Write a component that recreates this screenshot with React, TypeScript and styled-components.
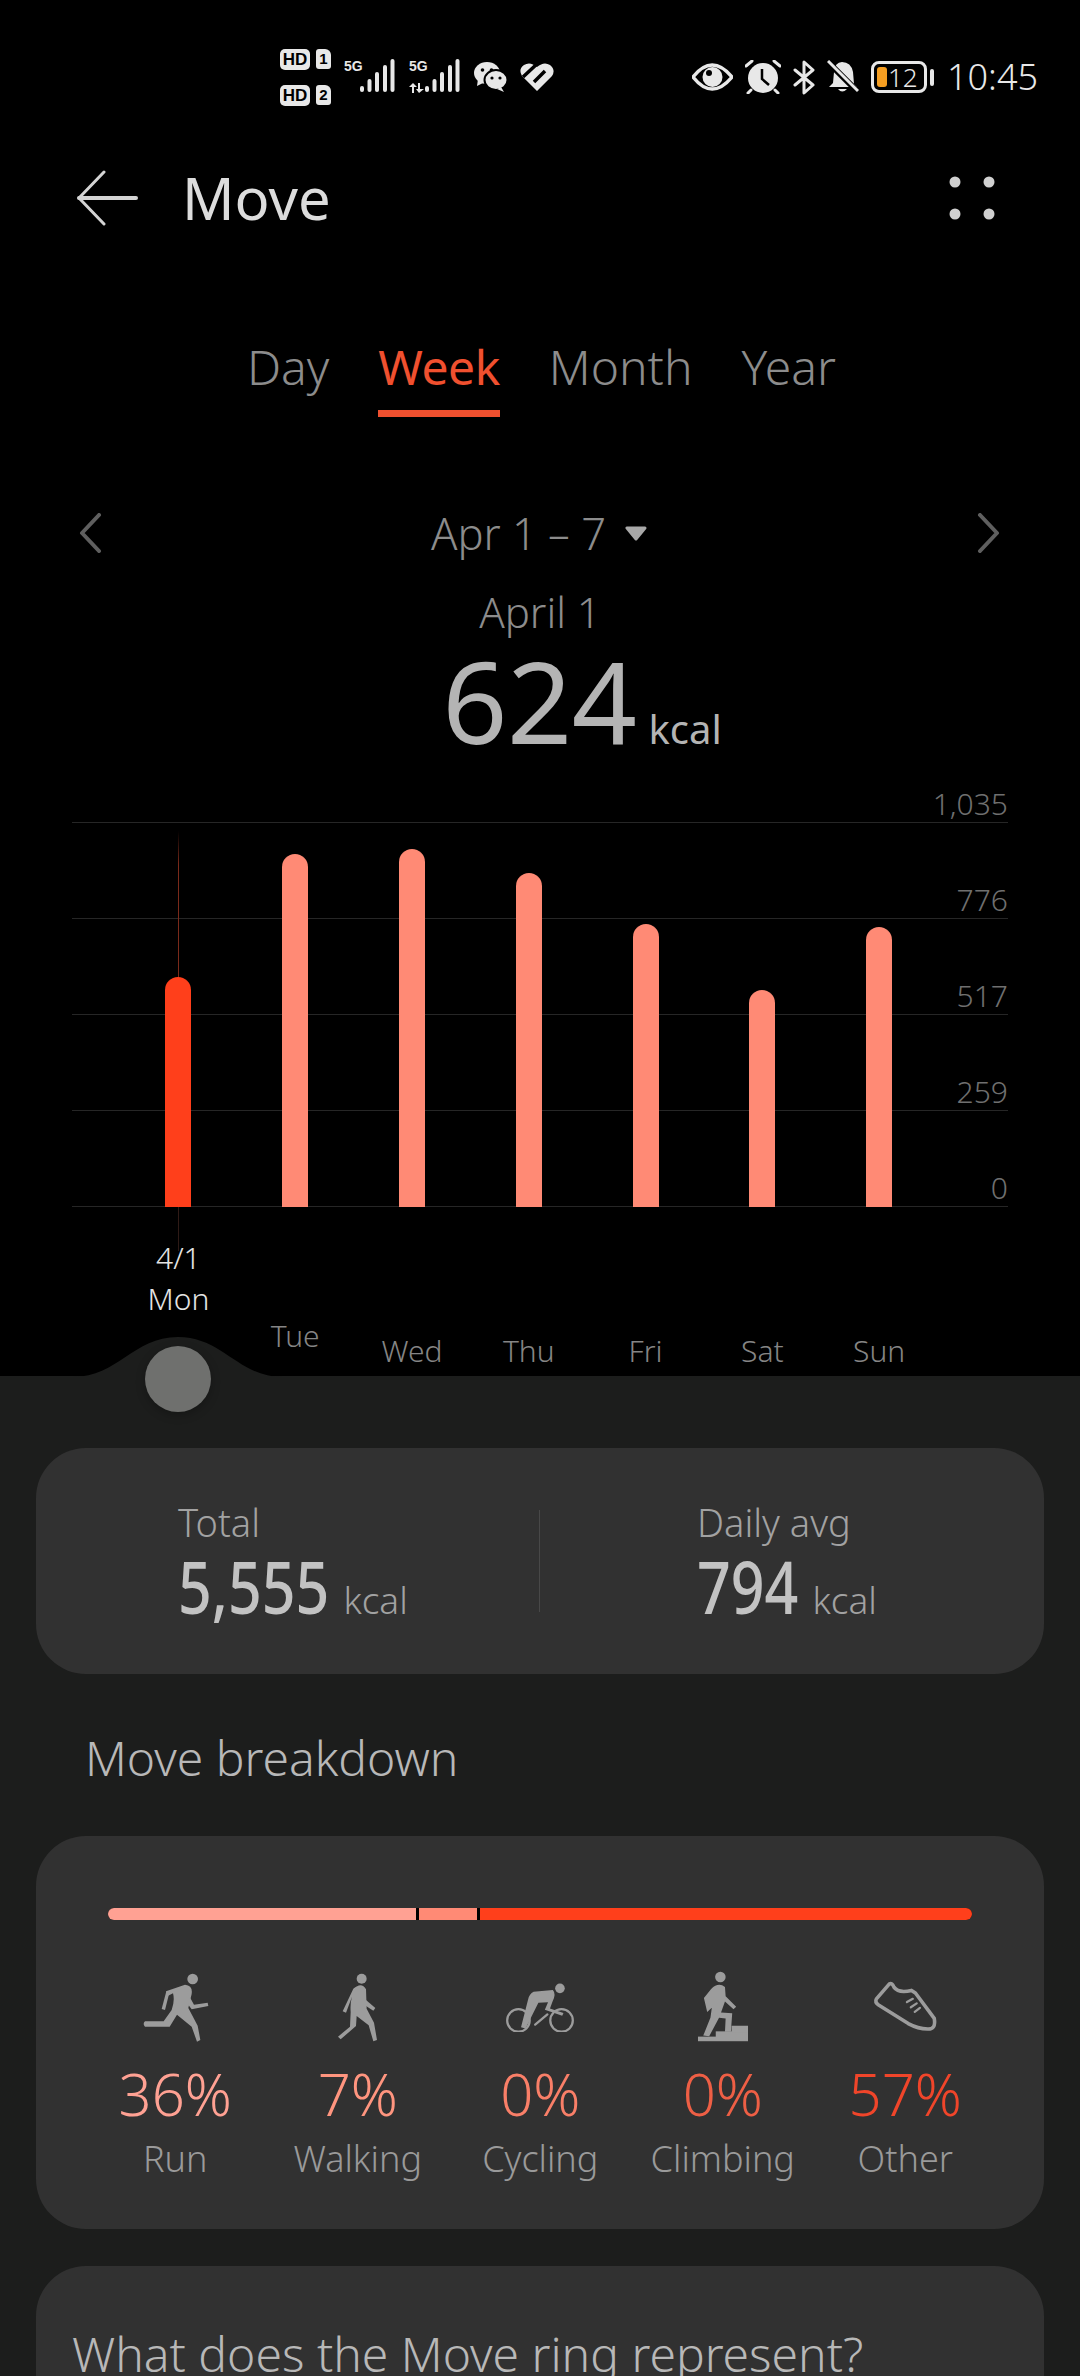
import styled, { createGlobalStyle } from "styled-components";

const GlobalStyle = createGlobalStyle`
  html, body {
    margin: 0;
    padding: 0;
    background: #000;
  }
  * { box-sizing: border-box; }
`;

const Page = styled.div`
  width: 1080px;
  height: 2376px;
  overflow: hidden;
  background: #000;
  font-family: "Noto Sans", "Open Sans", sans-serif;
  font-weight: 300;
  display: flex;
  flex-direction: column;

  & > * {
    flex-shrink: 0;
  }
`;

/* status bar */
const StatusBar = styled.div`
  height: 74px;
  margin-top: 40px;
  padding: 0 42px 0 280px;
  display: flex;
  justify-content: space-between;
  align-items: center;
  color: #e8e8e8;
`;

const StatusGroup = styled.div<{ $gap: number }>`
  display: flex;
  align-items: center;
  gap: ${({ $gap }) => $gap}px;
`;

const SimStack = styled.div`
  display: flex;
  flex-direction: column;
  gap: 15px;
  margin-right: 13px;
`;

const SimRow = styled.div`
  display: flex;
  gap: 6px;
`;

const HdBadge = styled.span`
  width: 30px;
  height: 21px;
  border-radius: 5px;
  background: #e8e8e8;
  color: #000;
  font: 700 17px/21px "Liberation Sans", sans-serif;
  text-align: center;
`;

const SimTag = styled.span`
  width: 15px;
  height: 20px;
  border-radius: 3px 6px 3px 3px;
  background: #e8e8e8;
  color: #000;
  font: 700 15px/20px "Liberation Sans", sans-serif;
  text-align: center;
`;

const Signal = styled.div`
  position: relative;
  width: 52px;
  height: 36px;
`;

const NetLabel = styled.span`
  position: absolute;
  left: 0;
  top: 0;
  font: 700 14px/15px "Liberation Sans", sans-serif;
  color: #e8e8e8;
`;

const DataArrows = styled.svg`
  position: absolute;
  left: 0;
  bottom: 2px;
`;

const BatteryShell = styled.div`
  display: flex;
  align-items: center;
  gap: 3px;
  margin-right: 1px;
`;

const BatteryBody = styled.div`
  width: 56px;
  height: 32px;
  border: 3px solid #e8e8e8;
  border-radius: 8px;
  padding: 3px;
  display: flex;
  align-items: stretch;
  gap: 1px;
`;

const BatteryFill = styled.div`
  width: 10px;
  background: #f59e21;
  border-radius: 3px;
`;

const BatteryText = styled.span`
  font: 300 26px/20px "Noto Sans", sans-serif;
  color: #e8e8e8;
`;

const BatteryNub = styled.div`
  width: 4px;
  height: 17px;
  border-radius: 2px;
  background: #e8e8e8;
`;

const Clock = styled.span`
  font-size: 36px;
  line-height: 40px;
  color: #e8e8e8;
`;

/* header */
const Header = styled.div`
  height: 100px;
  margin-top: 34px;
  padding: 0 85px 0 76px;
  display: flex;
  align-items: center;
`;

const Title = styled.h1`
  flex: 1;
  margin: 0 0 0 44px;
  font-size: 58px;
  font-weight: 400;
  line-height: 70px;
  color: #dcdcdc;
`;

/* period tabs */
const Tabs = styled.div`
  margin-top: 75px;
  padding-left: 3px;
  display: flex;
  justify-content: center;
  gap: 49px;
`;

const Tab = styled.span<{ $active?: boolean }>`
  height: 94px;
  padding-top: 14px;
  font-size: 48px;
  line-height: 60px;
  font-weight: ${({ $active }) => ($active ? 400 : 300)};
  letter-spacing: ${({ $active }) => ($active ? "-0.5px" : "0")};
  color: ${({ $active }) => ($active ? "#f0502f" : "#8c8c8c")};
  border-bottom: 7px solid ${({ $active }) => ($active ? "#f0502f" : "transparent")};
`;

/* date nav */
const DateNav = styled.div`
  margin-top: 81px;
  padding: 0 79px 0 78px;
  display: flex;
  justify-content: space-between;
  align-items: center;
  height: 70px;
`;

const DateRange = styled.span`
  display: flex;
  align-items: center;
  gap: 18px;
  font-size: 43.5px;
  color: #8c8c8c;
`;

const Summary = styled.div`
  margin-top: 15px;
  display: flex;
  flex-direction: column;
  align-items: center;
`;

const DayLabel = styled.span`
  font-size: 42px;
  line-height: 58px;
  color: #8c8c8c;
`;

const BigValue = styled.div`
  display: flex;
  align-items: baseline;
  gap: 12px;
  padding-left: 84px;
  color: #b4b4b4;
  height: 118px;
`;

const BigNumber = styled.span`
  font-size: 114px;
  line-height: 118px;
  font-weight: 400;
  letter-spacing: -0.5px;
`;

const BigUnit = styled.span`
  font-size: 40px;
  font-weight: 400;
`;

/* chart */
const Chart = styled.div`
  position: relative;
  margin: 16px 72px 0;
  height: 601px;
`;

const GridRows = styled.div`
  display: flex;
  flex-direction: column;
`;

const GridRow = styled.div`
  height: 96px;
  border-bottom: 1px solid #262626;
  display: flex;
  align-items: flex-end;
  justify-content: flex-end;
  font-size: 30px;
  line-height: 36px;
  color: #6f6f6f;
`;

const FirstGridRow = styled(GridRow)`
  height: 48px;
`;

const BarRow = styled.div`
  position: absolute;
  left: 48px;
  top: 48px;
  width: 818px;
  height: 384px;
  display: grid;
  grid-template-columns: repeat(7, 116.8px);
  align-items: end;
  justify-items: center;
`;

const Bar = styled.div<{ $active?: boolean }>`
  width: 26px;
  border-radius: 13px 13px 0 0;
  background: ${({ $active }) => ($active ? "#ff3f1b" : "#ff8a75")};
`;

const Cursor = styled.div`
  position: absolute;
  left: 106px;
  top: 56px;
  width: 1px;
  height: 420px;
  background: linear-gradient(#000, #7a2a1a 8%, #7a2a1a 60%, #3a1c16 70%, #2c1a16);
`;

const DayAxis = styled.div`
  position: absolute;
  left: 48px;
  top: 432px;
  width: 818px;
  height: 169px;
  display: grid;
  grid-template-columns: repeat(7, 116.8px);
  justify-items: center;
  text-align: center;
  font-size: 30px;
  line-height: 41px;
`;

const DayTick = styled.div<{ $lift: number; $active?: boolean }>`
  padding-top: ${({ $lift }) => $lift}px;
  color: ${({ $active }) => ($active ? "#e4e4e4" : "#858585")};
`;

/* lower panel */
const Lower = styled.div`
  position: relative;
  flex: 1 0 auto;
  background: #1c1d1c;
  padding: 72px 36px 0;
`;

const Hump = styled.svg`
  position: absolute;
  left: 73px;
  top: -40px;
`;

const Knob = styled.div`
  position: absolute;
  left: 145px;
  top: -30px;
  width: 66px;
  height: 66px;
  border-radius: 50%;
  background: #6f706e;
  box-shadow: 0 3px 10px rgba(0, 0, 0, 0.25);
`;

const Card = styled.section`
  background: #313131;
  border-radius: 50px;
`;

const TotalsCard = styled(Card)`
  height: 226px;
  display: grid;
  grid-template-columns: 504px 1fr;
  align-items: center;
`;

const TotalCell = styled.div<{ $left: number; $divider?: boolean }>`
  height: 102px;
  padding-left: ${({ $left }) => $left}px;
  border-right: ${({ $divider }) => ($divider ? "1px solid #484848" : "none")};
`;

const TotalLabel = styled.div`
  margin-top: -10px;
  font-size: 38px;
  line-height: 44px;
  color: #a2a2a2;
`;

const TotalValue = styled.div`
  margin-top: 4px;
  display: flex;
  align-items: baseline;
  gap: 14px;
  font-size: 37px;
  line-height: 76px;
  color: #a2a2a2;
`;

/* digits are narrower than any installed face, so squeeze them and take the slack back */
const TotalNumber = styled.span<{ $slack: number }>`
  display: inline-block;
  font-size: 72px;
  font-weight: 500;
  color: #c2c2c2;
  transform: scaleX(0.82);
  transform-origin: left center;
  margin-right: ${({ $slack }) => -$slack}px;
`;

const SectionTitle = styled.h2`
  margin: 53px 0 47px 49px;
  font-size: 48px;
  line-height: 62px;
  font-weight: 300;
  color: #b8b8b8;
`;

const BreakdownCard = styled(Card)`
  height: 393px;
  padding: 72px 72px 0;
`;

const StackBar = styled.div`
  height: 12px;
  display: flex;
  border-radius: 6px;
  overflow: hidden;
  background: #000;
`;

const StackPart = styled.div<{ $color: string; $w: number }>`
  width: ${({ $w }) => $w}px;
  margin-right: 3px;
  background: ${({ $color }) => $color};
  &:last-child { margin-right: 0; }
`;

const Activities = styled.div`
  margin: 50px 0 0 -24px;
  display: grid;
  grid-template-columns: repeat(5, 182.5px);
`;

const Activity = styled.div`
  display: flex;
  flex-direction: column;
  align-items: center;
`;

const IconSlot = styled.div`
  height: 72px;
  display: flex;
  align-items: center;
  justify-content: center;
`;

const Percent = styled.span<{ $color: string }>`
  margin-top: 16px;
  font-size: 58px;
  line-height: 72px;
  color: ${({ $color }) => $color};
`;

const ActivityName = styled.span`
  margin-top: 5px;
  font-size: 36px;
  line-height: 48px;
  color: #9a9a9a;
`;

const InfoCard = styled(Card)`
  margin-top: 37px;
  height: 120px;
  padding: 55px 36px 0;
  border-radius: 50px 50px 0 0;
`;

const InfoTitle = styled.div`
  font-size: 48px;
  line-height: 66px;
  color: #b8b8b8;
  white-space: nowrap;
`;

const BackIcon = () => (
  <svg width="62" height="56" viewBox="0 0 62 56" fill="none" stroke="#d4d4d4" strokeWidth="3" strokeLinecap="round" strokeLinejoin="round">
    <path d="M28 2 L3 28 L28 54" />
    <path d="M3 28 H60" strokeWidth="4" />
  </svg>
);

const MoreIcon = () => (
  <svg width="46" height="44" viewBox="0 0 46 44" fill="#d0d0d0">
    <circle cx="6" cy="6" r="5.5" />
    <circle cx="40" cy="6" r="5.5" />
    <circle cx="6" cy="38" r="5.5" />
    <circle cx="40" cy="38" r="5.5" />
  </svg>
);

const Chevron = ({ flip }: { flip?: boolean }) => (
  <svg width="24" height="40" viewBox="0 0 24 40" fill="none" stroke="#5f5f5f" strokeWidth="4" strokeLinecap="round" strokeLinejoin="round">
    <path d={flip ? "M3 2 L20 20 L3 38" : "M21 2 L4 20 L21 38"} />
  </svg>
);

const CaretIcon = () => (
  <svg width="24" height="16" viewBox="0 0 24 16" fill="#a8a8a8" stroke="#a8a8a8" strokeWidth="3" strokeLinejoin="round">
    <path d="M3 3 H21 L12 14 Z" />
  </svg>
);

const SignalBars = () => (
  <svg width="36" height="33" viewBox="0 0 36 33" fill="#e8e8e8" style={{ position: "absolute", right: 0, top: 0 }}>
    <rect x="0" y="27" width="4" height="6" rx="2" />
    <rect x="7.5" y="20" width="4" height="13" rx="2" />
    <rect x="15" y="13" width="4" height="20" rx="2" />
    <rect x="23" y="6" width="4" height="27" rx="2" />
    <rect x="30.5" y="0" width="4" height="33" rx="2" />
  </svg>
);

const WeChatIcon = () => (
  <svg width="33" height="30" viewBox="0 0 33 30">
    <ellipse cx="13" cy="11" rx="13" ry="11" fill="#e8e8e8" />
    <path d="M4 17 L3 24 L11 20 Z" fill="#e8e8e8" />
    <circle cx="8.5" cy="8" r="1.8" fill="#000" />
    <circle cx="17.5" cy="8" r="1.8" fill="#000" />
    <ellipse cx="22" cy="18" rx="11.5" ry="10" fill="#e8e8e8" stroke="#000" strokeWidth="2" />
    <path d="M27 25 L30 30 L23 27 Z" fill="#e8e8e8" />
    <circle cx="18" cy="16" r="1.6" fill="#000" />
    <circle cx="26" cy="16" r="1.6" fill="#000" />
  </svg>
);

const HeartIcon = () => (
  <svg width="34" height="30" viewBox="0 0 34 30">
    <path d="M17 29 L2 14 Q-2 7 4 3 Q10 -1 17 5 Q24 -1 30 3 Q36 8 32 14 Z" fill="#e8e8e8" />
    <path d="M3 15 L18 1 M14 20 L25 9" stroke="#000" strokeWidth="3.5" />
  </svg>
);

const EyeIcon = () => (
  <svg width="41" height="30" viewBox="0 0 41 30">
    <path d="M1 15 Q20 -9 40 15 Q20 39 1 15 Z" fill="none" stroke="#e8e8e8" strokeWidth="3.5" />
    <circle cx="20.5" cy="15" r="10" fill="#e8e8e8" />
    <circle cx="17" cy="11" r="3" fill="#000" />
  </svg>
);

const AlarmIcon = () => (
  <svg width="36" height="34" viewBox="0 0 36 34">
    <circle cx="18" cy="18" r="15" fill="#e8e8e8" />
    <path d="M17 9 V19 L24 25" fill="none" stroke="#000" strokeWidth="2.5" />
    <path d="M1 6 L7 1 M35 6 L29 1 M6 30 L3 33 M30 30 L33 33" stroke="#e8e8e8" strokeWidth="3" strokeLinecap="round" />
  </svg>
);

const BluetoothIcon = () => (
  <svg width="22" height="35" viewBox="0 0 22 35" fill="none" stroke="#e8e8e8" strokeWidth="3" strokeLinejoin="round" strokeLinecap="round">
    <path d="M2 10 L20 25 L11 33 V2 L20 10 L2 25" />
  </svg>
);

const BellOffIcon = () => (
  <svg width="32" height="34" viewBox="0 0 32 34">
    <path d="M15 2 Q24 2 26 12 L27 24 L30 27 H2 L6 23 L7 12 Q8 2 15 2 Z" fill="#e8e8e8" />
    <path d="M11 29 Q15 34 20 29 Z" fill="#e8e8e8" />
    <path d="M1 2 L31 32" stroke="#000" strokeWidth="6" />
    <path d="M1 1 L31 31" stroke="#e8e8e8" strokeWidth="3" />
  </svg>
);

const RunIcon = () => (
  <svg width="68" height="72" viewBox="120 258 204 216" fill="#9c9c9c" stroke="none">
    <circle cx="275" cy="285" r="16" />
    <path d="M195 322 L252 302 Q276 304 272 330 L262 372 L290 425 L298 468 L288 473 L272 428 L228 392 L206 428 L132 428 Q124 420 132 412 L188 412 L212 378 Q222 350 216 328 L200 336 Z" />
    <path d="M196 322 L204 330 L192 378 L182 375 Z" />
    <path d="M268 342 L279 362 L320 356 L322 366 L272 376 L260 360 Z" />
  </svg>
);

const WalkIcon = () => (
  <svg width="46" height="72" viewBox="705 262 138 216" fill="#9c9c9c" stroke="none">
    <circle cx="785" cy="288" r="15" />
    <path d="M760 318 Q785 296 798 320 L800 378 L822 420 L831 472 L820 476 L806 428 L770 400 L768 430 L722 470 L714 462 L750 432 L752 388 Q750 360 756 342 L738 390 L728 386 Z" />
    <path d="M798 352 L826 376 L820 384 L798 370 Z" />
  </svg>
);

const CycleIcon = () => (
  <svg width="74" height="52" viewBox="30 40 230 160" fill="none">
    <circle cx="78" cy="165" r="35" stroke="#9c9c9c" strokeWidth="7" />
    <circle cx="212" cy="165" r="35" stroke="#9c9c9c" strokeWidth="7" />
    <circle cx="207" cy="65" r="15" fill="#9c9c9c" />
    <path d="M125 76 L185 70 Q196 82 184 106 L176 128 L218 142 L214 150 L160 132 L170 108 L140 110 L100 190 L86 186 L108 100 Q112 82 125 76 Z" fill="#9c9c9c" />
    <path d="M130 178 L168 146" stroke="#9c9c9c" strokeWidth="7" strokeLinecap="round" />
  </svg>
);

const ClimbIcon = () => (
  <svg width="52" height="72" viewBox="405 262 158 216" fill="#9c9c9c" stroke="none">
    <circle cx="476" cy="282" r="16" />
    <path d="M448 318 Q470 296 490 312 L492 340 L524 372 L516 380 L490 356 L478 390 L512 392 L508 448 L490 448 L492 408 L472 406 L442 462 L424 460 L446 405 L450 375 L436 388 L426 346 Z" />
    <rect x="408" y="463" width="152" height="14" />
    <rect x="462" y="447" width="98" height="20" />
    <rect x="510" y="430" width="50" height="20" />
  </svg>
);

const ShoeIcon = () => (
  <svg width="66" height="52" viewBox="930 290 200 160" fill="none" stroke="#9c9c9c" strokeWidth="11" strokeLinejoin="round" strokeLinecap="round">
    <path d="M942 348 L982 302 Q990 298 996 312 Q1010 332 1050 322 L1062 330 L1120 408 Q1126 442 1100 441 Q1070 440 1040 424 L950 368 Q936 358 942 348 Z" />
    <path d="M1036 358 L1054 348 M1048 374 L1066 362 M1060 388 L1076 376" strokeWidth="7" />
  </svg>
);

const bars = [230, 353, 358, 334, 283, 217, 280];
const ticks = [
  { label: ["4/1", "Mon"], lift: 30, active: true },
  { label: ["Tue"], lift: 108 },
  { label: ["Wed"], lift: 123 },
  { label: ["Thu"], lift: 123 },
  { label: ["Fri"], lift: 123 },
  { label: ["Sat"], lift: 123 },
  { label: ["Sun"], lift: 123 },
];

const activities = [
  { name: "Run", pct: "36%", color: "#ffa193", icon: <RunIcon /> },
  { name: "Walking", pct: "7%", color: "#ff957f", icon: <WalkIcon /> },
  { name: "Cycling", pct: "0%", color: "#f97f68", icon: <CycleIcon /> },
  { name: "Climbing", pct: "0%", color: "#ee5f45", icon: <ClimbIcon /> },
  { name: "Other", pct: "57%", color: "#f0452a", icon: <ShoeIcon /> },
];

export default function App() {
  return (
    <Page>
      <GlobalStyle />
      <StatusBar>
        <StatusGroup $gap={0}>
          <SimStack>
            <SimRow><HdBadge>HD</HdBadge><SimTag>1</SimTag></SimRow>
            <SimRow><HdBadge>HD</HdBadge><SimTag>2</SimTag></SimRow>
          </SimStack>
          <StatusGroup $gap={13}>
            <Signal><NetLabel>5G</NetLabel><SignalBars /></Signal>
            <Signal>
              <NetLabel>5G</NetLabel>
              <DataArrows width="15" height="10" viewBox="0 0 15 10" fill="#e8e8e8">
                <path d="M3 10 V4 H0 L4 0 L8 4 H5 V10 Z" />
                <path d="M9 0 H11 V6 H15 L10 10 L7 6 H9 Z" />
              </DataArrows>
              <SignalBars />
            </Signal>
            <WeChatIcon />
            <HeartIcon />
          </StatusGroup>
        </StatusGroup>
        <StatusGroup $gap={12}>
          <EyeIcon />
          <AlarmIcon />
          <BluetoothIcon />
          <BellOffIcon />
          <BatteryShell>
            <BatteryBody>
              <BatteryFill />
              <BatteryText>12</BatteryText>
            </BatteryBody>
            <BatteryNub />
          </BatteryShell>
          <Clock>10:45</Clock>
        </StatusGroup>
      </StatusBar>

      <Header>
        <BackIcon />
        <Title>Move</Title>
        <MoreIcon />
      </Header>

      <Tabs>
        <Tab>Day</Tab>
        <Tab $active>Week</Tab>
        <Tab>Month</Tab>
        <Tab>Year</Tab>
      </Tabs>

      <DateNav>
        <Chevron />
        <DateRange>Apr 1 – 7 <CaretIcon /></DateRange>
        <Chevron flip />
      </DateNav>

      <Summary>
        <DayLabel>April 1</DayLabel>
        <BigValue>
          <BigNumber>624</BigNumber>
          <BigUnit>kcal</BigUnit>
        </BigValue>
      </Summary>

      <Chart>
        <GridRows>
          <FirstGridRow>1,035</FirstGridRow>
          <GridRow>776</GridRow>
          <GridRow>517</GridRow>
          <GridRow>259</GridRow>
          <GridRow>0</GridRow>
        </GridRows>
        <Cursor />
        <BarRow>
          {bars.map((h, i) => (
            <Bar key={i} $active={i === 0} style={{ height: h }} />
          ))}
        </BarRow>
        <DayAxis>
          {ticks.map((t) => (
            <DayTick key={t.label[0]} $lift={t.lift} $active={t.active}>
              {t.label.map((l) => (
                <div key={l}>{l}</div>
              ))}
            </DayTick>
          ))}
        </DayAxis>
      </Chart>

      <Lower>
        <Hump width="210" height="41" viewBox="0 0 210 41">
          <path d="M0 41 C45 41 60 1 105 1 C150 1 165 41 210 41 Z" fill="#1c1d1c" />
        </Hump>
        <Knob />
        <TotalsCard>
          <TotalCell $left={142} $divider>
            <TotalLabel>Total</TotalLabel>
            <TotalValue><TotalNumber $slack={33}>5,555</TotalNumber> kcal</TotalValue>
          </TotalCell>
          <TotalCell $left={157}>
            <TotalLabel>Daily avg</TotalLabel>
            <TotalValue><TotalNumber $slack={22}>794</TotalNumber> kcal</TotalValue>
          </TotalCell>
        </TotalsCard>

        <SectionTitle>Move breakdown</SectionTitle>

        <BreakdownCard>
          <StackBar>
            <StackPart $color="#ffa193" $w={308} />
            <StackPart $color="#ff8a75" $w={58} />
            <StackPart $color="#ff3f1b" $w={492} />
          </StackBar>
          <Activities>
            {activities.map((a) => (
              <Activity key={a.name}>
                <IconSlot>{a.icon}</IconSlot>
                <Percent $color={a.color}>{a.pct}</Percent>
                <ActivityName>{a.name}</ActivityName>
              </Activity>
            ))}
          </Activities>
        </BreakdownCard>

        <InfoCard>
          <InfoTitle>What does the Move ring represent?</InfoTitle>
        </InfoCard>
      </Lower>
    </Page>
  );
}
